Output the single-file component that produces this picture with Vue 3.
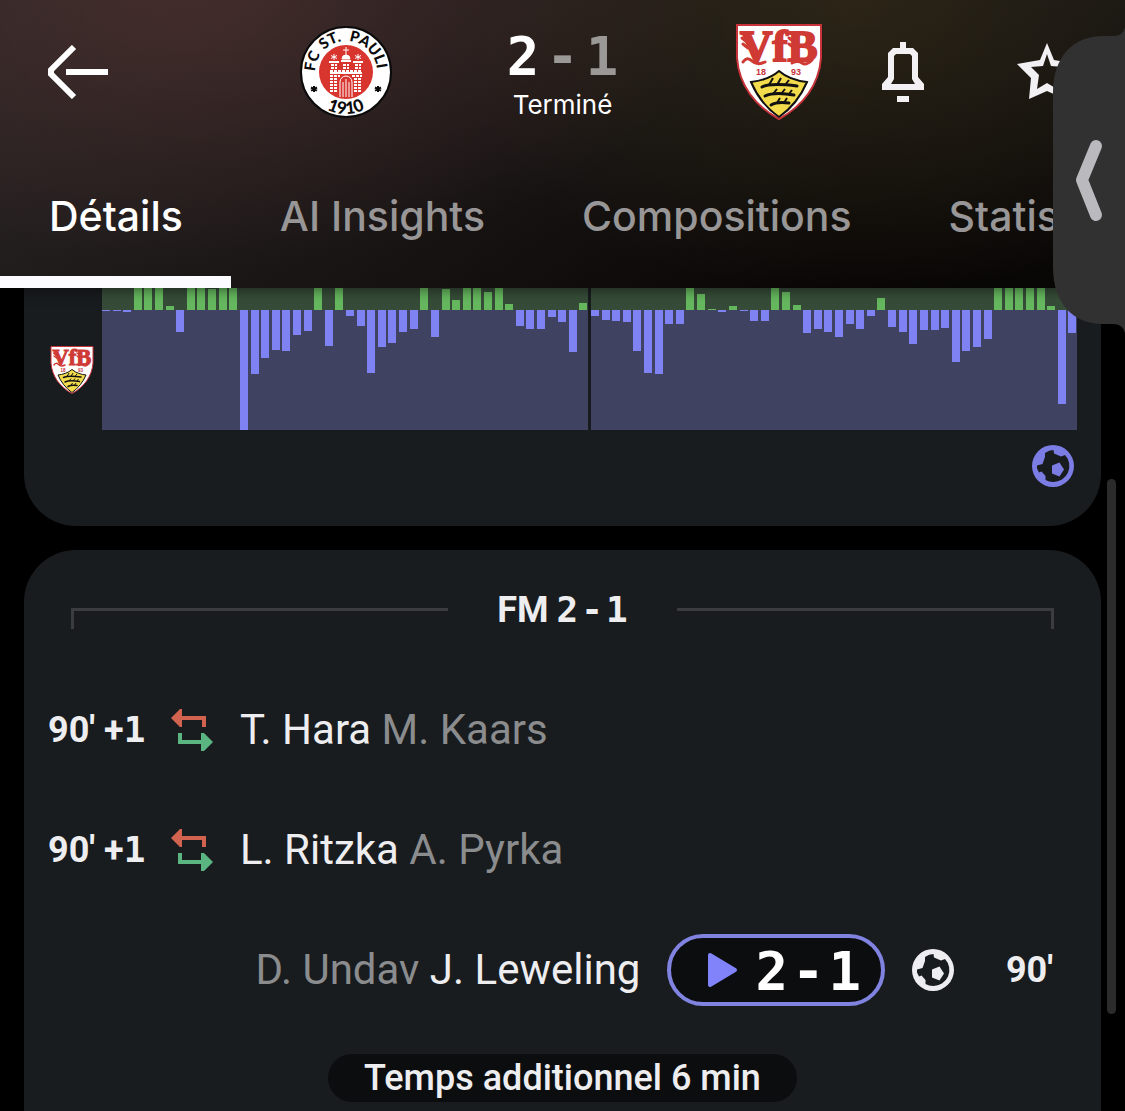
<template>
  <div class="page">
    <!-- Shared symbols -->
    <svg class="defs" aria-hidden="true">
      <symbol id="ball" viewBox="0 0 42 42">
        <path
          fill="currentColor"
          fill-rule="evenodd"
          d="M21 0A21 21 0 1 1 21 42A21 21 0 1 1 21 0ZM13 8L13 12L10.500 19L5 20.500L5 23.500L7 27.500L9.500 26.500L13.500 31L13.500 35Q17 37 21 37A16 16 0 0 0 33 10L29 11.500L22 8.500L21.500 5Q17 5 13 8Z"
        />
        <path fill="currentColor" d="M20 20.500L27.500 17.500L32 24.500L27.500 31.500L20 28.500Z" />
      </symbol>
    </svg>

    <header class="header">
      <div class="topbar">
        <button class="icon-btn back" aria-label="Retour">
          <svg width="60" height="54" viewBox="0 0 60 54">
            <path d="M26 2L3 25V29L26 52M18 27H60" fill="none" stroke="#fff" stroke-width="6" />
          </svg>
        </button>

        <div class="match">
          <svg width="92" height="92" viewBox="0 0 92 92" role="img" aria-label="FC St. Pauli">
            <circle cx="46" cy="46" r="45" fill="#fff" stroke="#0b0b0b" stroke-width="2" />
            <circle cx="46" cy="46" r="27" fill="#d8352f" />
            <path id="arc-top" d="M15 46A31 31 0 0 1 77 46" fill="none" />
            <path id="arc-bottom" d="M4 46A42 42 0 0 0 88 46" fill="none" />
            <g font-family="Lato, sans-serif" font-weight="900" fill="#0b0b0b" text-anchor="middle">
              <text font-size="15"><textPath href="#arc-top" startOffset="10%">FC</textPath></text>
              <text font-size="15"><textPath href="#arc-top" startOffset="35%">ST.</textPath></text>
              <text font-size="15"><textPath href="#arc-top" startOffset="75%">PAULI</textPath></text>
              <text font-size="17"><textPath href="#arc-bottom" startOffset="50%">1910</textPath></text>
            </g>
            <path d="M14 60V66M11 61.500L17 64.500M17 61.500L11 64.500M78 60V66M75 61.500L81 64.500M81 61.500L75 64.500" stroke="#0b0b0b" stroke-width="2" />
            <g stroke="#fff" fill="none">
              <path d="M46 21V29M43 24H49" stroke-width="1" />
              <path d="M42 33A4 4 0 0 1 50 33Z" fill="#fff" />
              <path d="M34 28V34M31 29.500L37 32.500M37 29.500L31 32.500M58 28V34M55 29.500L61 32.500M61 29.500L55 32.500" stroke-width="1" />
              <path d="M29 36H39M41 35H51M53 36H63M30 47H62" stroke-width="2" />
              <path d="M31 39H37M43 39H49M55 39H61M31 42H37M43 42H49M55 42H61M30 45H62M30 50H40M52 50H62M30 53H38M54 53H62M30 56H38M54 56H62M30 59H38M54 59H62M30 62H38M54 62H62M30 65H38M54 65H62" stroke-width="2" stroke-dasharray="3 1" />
              <path d="M40 71V56A6 6 0 0 1 52 56V71M43 71V56M46 71V53M49 71V56" stroke-width="1" />
            </g>
          </svg>
          <div class="result">
            <div class="score">
              <span>2</span>
              <span class="muted">-</span>
              <span class="muted">1</span>
            </div>
            <div class="status">Terminé</div>
          </div>
          <svg width="92" height="96" viewBox="0 0 88 96" role="img" aria-label="VfB Stuttgart">
            <g id="vfb">
              <path d="M2 1H86V34C84 61 68 82 44 95C20 82 4 61 2 34Z" fill="#fff" stroke="#c8323a" stroke-width="2" />
              <g fill="#cf3a35" stroke="#cf3a35">
                <text x="5" y="37" font-family="Liberation Serif, serif" font-weight="700" font-size="45" stroke-width="2">VfB</text>
                <g fill="none" stroke-width="3" stroke-linecap="round">
                  <path d="M7 14L12 18M8 20L13 24M8 38Q12 32 17 37T30 38" />
                  <path d="M54 14L58 17M54 20L58 23M57 39Q63 36 67 39T77 36" />
                </g>
              </g>
              <g fill="#c8323a" font-family="Liberation Sans, sans-serif" font-weight="700" font-size="9">
                <text x="21" y="51">18</text>
                <text x="56" y="51">93</text>
              </g>
              <path d="M44 47C52 54 63 57 72 58C66 72 57 84 44 93C31 84 22 72 16 58C25 57 36 54 44 47Z" fill="#f3dc4c" stroke="#111" stroke-width="2" />
              <g fill="none" stroke="#111" stroke-width="3" stroke-linecap="round">
                <path d="M27 63C33 60 46 60 62 62" />
                <path d="M30 72C36 69 48 69 59 71" />
                <path d="M36 81C41 78 47 78 54 79" />
              </g>
              <path d="M34 61L38 54M42 61L46 54M50 61L54 56M38 70L42 65M46 70L50 65M54 70L57 66M42 79L45 74M49 79L52 74" stroke="#111" stroke-width="2" />
            </g>
          </svg>
        </div>

        <div class="actions">
          <button class="icon-btn" aria-label="Notifications">
            <svg width="42" height="60" viewBox="0 0 42 60" fill="#f2f0f2">
              <path fill-rule="evenodd" d="M18 0H24V6H31L36 11V35L42 42V48H0V42L6 35V11L11 6H18ZM14 12L12 14V37L9 42H33L30 37V14L28 12Z" />
              <path d="M15 54H27V60H15Z" />
            </svg>
          </button>
          <button class="icon-btn" aria-label="Favori">
            <svg width="60" height="60" viewBox="0 0 60 60" fill="#f2f0f2">
              <path
                fill-rule="evenodd"
                d="M30 1L37 18L60 22L46 36L48 57L30 49L12 57L14 36L0 22L23 18ZM30 12L26 24L14 25L22 33L20 47L30 41L40 47L38 33L46 25L34 24Z"
              />
            </svg>
          </button>
        </div>
      </div>

      <nav class="tabs">
        <a v-for="tab in tabs" :key="tab" href="#" class="tab" :class="{ active: tab === activeTab }" @click.prevent="activeTab = tab">{{ tab }}</a>
      </nav>
    </header>

    <!-- Attack momentum -->
    <section class="card momentum">
      <div class="graph">
        <svg class="team" width="44" height="48" viewBox="0 0 88 96" role="img" aria-label="VfB Stuttgart"><use href="#vfb" /></svg>
        <div class="halves">
          <div v-for="(half, h) in momentum" :key="h" class="half">
            <div class="side home">
              <span v-for="(v, i) in half" :key="i" class="bar" :style="{ height: Math.max(v, 0) + 'px' }"></span>
            </div>
            <div class="side away">
              <span v-for="(v, i) in half" :key="i" class="bar" :style="{ height: Math.max(-v, 0) + 'px' }"></span>
            </div>
          </div>
        </div>
      </div>
      <div class="goals">
        <svg width="42" height="42"><use href="#ball" /></svg>
      </div>
    </section>

    <!-- Incidents -->
    <section class="card incidents">
      <div class="period">
        <span class="line left"></span>
        <h2>FM <span class="digits"><span>2</span><span>-</span><span>1</span></span></h2>
        <span class="line right"></span>
      </div>

      <div v-for="sub in substitutions" :key="sub.in" class="event">
        <span class="time">90' +<span class="one">1</span></span>
        <svg width="42" height="42" viewBox="0 0 42 42">
          <path fill="#d2644f" d="M0 9L9 0H11V7H35V18H31V11H11V18H9Z" />
          <path fill="#5bb580" d="M7 24H11V31H30V24H33L42 33L33 42H30V35H7Z" />
        </svg>
        <p class="names">{{ sub.in }} <span class="muted">{{ sub.out }}</span></p>
      </div>

      <div class="event away-event">
        <p class="names"><span class="muted">D. Undav</span> J. Leweling</p>
        <button class="goal">
          <svg width="32" height="36" viewBox="0 0 32 36">
            <path d="M3 3L28 18L3 33Z" fill="#8083fa" stroke="#8083fa" stroke-width="4" stroke-linejoin="round" />
          </svg>
          <span class="score"><span>2</span><span>-</span><span>1</span></span>
        </button>
        <svg class="white-ball" width="42" height="42"><use href="#ball" /></svg>
        <span class="time">90'</span>
      </div>

      <div class="added">Temps additionnel 6 min</div>
    </section>

    <div class="scrollbar"></div>

    <button class="edge-handle" aria-label="Ouvrir le panneau">
      <svg width="72" height="306" viewBox="0 0 72 306">
        <path d="M72 0Q70 9 60 9H50C20 9 0 30 0 66V240C0 276 20 297 50 297H60Q70 297 72 306Z" fill="#323131" />
        <path d="M43 119L29 153L43 188" fill="none" stroke="#bab9be" stroke-width="12" stroke-linecap="round" stroke-linejoin="round" />
      </svg>
    </button>
  </div>
</template>

<script setup>
import { ref } from 'vue'

const tabs = ['Détails', 'AI Insights', 'Compositions', 'Statistiques']
const activeTab = ref('Détails')

// > 0 : pression domicile, < 0 : pression extérieur
const momentum = [
  [
    -1, -1, -2, 60, 70, 40, 4, -22, 50, 40, 21, 60, 45, -120, -64, -48, -40, -41, -25, -21, 50, -36, 60,
    -6, -16, -63, -37, -33, -22, -19, 40, -27, 21, 10, 60, 50, 18, 40, 6, -16, -19, -19, -7, -12, -42, 7
  ],
  [
    -6, -10, -11, -12, -41, -63, -64, -14, -14, 50, 16, 1, -2, 4, -1, -11, -11, 40, 18, 5, -23, -19, -22,
    -27, -14, -19, -6, 12, -17, -22, -34, -20, -20, -18, -52, -41, -37, -29, 60, 50, 70, 60, 40, 4, -94, -23
  ]
]

const substitutions = [
  { in: 'T. Hara', out: 'M. Kaars' },
  { in: 'L. Ritzka', out: 'A. Pyrka' }
]
</script>

<style>
body {
  background: #000;
}
</style>

<style scoped>
.page {
  position: relative;
  display: flex;
  flex-direction: column;
  min-height: 100vh;
  overflow: hidden;
  background: #000;
  color: #eeeef0;
  font-family: Inter, 'Liberation Sans', sans-serif;
}

.defs {
  position: absolute;
  width: 0;
  height: 0;
}

svg {
  display: block;
  flex-shrink: 0;
}

button {
  padding: 0;
  border: none;
  background: none;
  color: inherit;
  font: inherit;
  cursor: pointer;
}

.muted {
  color: #8b8c8e;
}

/* Header */
.header {
  position: relative;
  z-index: 1;
  overflow: hidden;
  background:
    radial-gradient(ellipse 520px 270px at 17% 0, rgba(96, 56, 54, 0.5), transparent),
    radial-gradient(ellipse 420px 300px at 76% 0, rgba(64, 54, 26, 0.5), transparent),
    linear-gradient(100deg, rgba(60, 54, 54, 0.5), transparent 75%),
    linear-gradient(#161313, #080605);
  box-shadow: 0 2px 12px rgba(0, 0, 0, 0.5);
}

.topbar {
  display: grid;
  grid-template-columns: 1fr auto 1fr;
  align-items: center;
  height: 144px;
  padding: 0 48px;
}

.match {
  display: flex;
  align-items: center;
  justify-content: space-between;
  width: 525px;
}

.result {
  display: flex;
  flex-direction: column;
  align-items: center;
  padding-top: 6px;
}

.score {
  display: flex;
  gap: 7px;
  color: #fff;
  font-family: 'DejaVu Sans Mono', monospace;
  font-size: 54px;
  font-weight: 700;
  line-height: 60px;
}

.score .muted {
  color: #9b9998;
}

.status {
  color: #fff;
  font-size: 26px;
  line-height: 36px;
}

.actions {
  display: flex;
  align-items: center;
  justify-content: flex-end;
  gap: 93px;
}

.tabs {
  display: flex;
}

.tab {
  flex-shrink: 0;
  box-sizing: border-box;
  height: 144px;
  padding: 0 48px 0 49px;
  border-bottom: 12px solid transparent;
  color: #989696;
  font-size: 41px;
  font-weight: 500;
  line-height: 144px;
  text-decoration: none;
}

.tab.active {
  border-bottom-color: #fcfbff;
  color: #fff;
}

/* Cards */
.card {
  margin: 0 24px;
  background: #191c1f;
}

.momentum {
  padding: 0 24px 39px;
  border-radius: 0 0 52px 52px;
}

.graph {
  display: flex;
  gap: 8px;
}

.team {
  margin: 58px 0 0 2px;
}

.halves {
  display: grid;
  flex: 1;
  grid-template-columns: 1fr 1fr;
  gap: 3px;
}

.side {
  display: flex;
  justify-content: space-between;
  overflow: hidden;
}

.home {
  align-items: flex-end;
  height: 22px;
  background: #364c38;
}

.away {
  align-items: flex-start;
  height: 120px;
  background: #3f4261;
}

.bar {
  flex-shrink: 0;
  width: 8px;
}

.home .bar {
  background: #66b85f;
}

.away .bar {
  background: #7f82f3;
}

.goals {
  display: flex;
  justify-content: flex-end;
  padding: 15px 3px 0;
  color: #7b7de4;
}

.incidents {
  flex: 1;
  margin-top: 24px;
  padding: 0 24px 8px;
  border-radius: 52px 52px 0 0;
  font-family: Roboto, 'Liberation Sans', sans-serif;
}

.period {
  display: flex;
  align-items: center;
  gap: 49px;
  height: 120px;
  padding: 0 23px;
}

.period h2 {
  display: flex;
  gap: 8px;
  margin: 0;
  font-size: 36px;
  font-weight: 700;
  line-height: 48px;
}

.digits {
  display: flex;
  gap: 3px;
  font-family: 'DejaVu Sans Mono', monospace;
}

.line {
  flex: 1;
  height: 18px;
  margin-top: 16px;
  border-top: 3px solid #3a3c3f;
}

.line.left {
  border-left: 3px solid #3a3c3f;
}

.line.right {
  border-right: 3px solid #3a3c3f;
}

.event {
  display: flex;
  align-items: center;
  height: 120px;
}

.time {
  width: 123px;
  font-size: 36px;
  font-weight: 700;
  line-height: 48px;
  white-space: nowrap;
}

.one {
  font-family: 'DejaVu Sans Mono', monospace;
}

.names {
  margin: 0 27px;
  font-size: 42px;
  line-height: 48px;
  white-space: nowrap;
}

.away-event {
  justify-content: flex-end;
}

.away-event .time {
  box-sizing: border-box;
  padding-right: 24px;
  text-align: right;
}

.goal {
  display: flex;
  align-items: center;
  gap: 16px;
  box-sizing: border-box;
  height: 72px;
  padding: 0 20px 0 36px;
  border: 4px solid #8083e0;
  border-radius: 36px;
  background: #0c0d0f;
}

.goal .score {
  gap: 4px;
  padding-top: 4px;
}

.white-ball {
  margin-left: 27px;
}

.added {
  width: fit-content;
  margin: 24px auto 0;
  padding: 0 36px;
  border-radius: 24px;
  background: #0c0d0f;
  font-size: 36px;
  font-weight: 500;
  line-height: 48px;
}

/* Overlays */
.scrollbar {
  position: absolute;
  top: 479px;
  right: 9px;
  width: 9px;
  height: 535px;
  border-radius: 5px;
  background: #2b2b2b;
}

.edge-handle {
  position: absolute;
  z-index: 2;
  top: 27px;
  right: 0;
}
</style>
